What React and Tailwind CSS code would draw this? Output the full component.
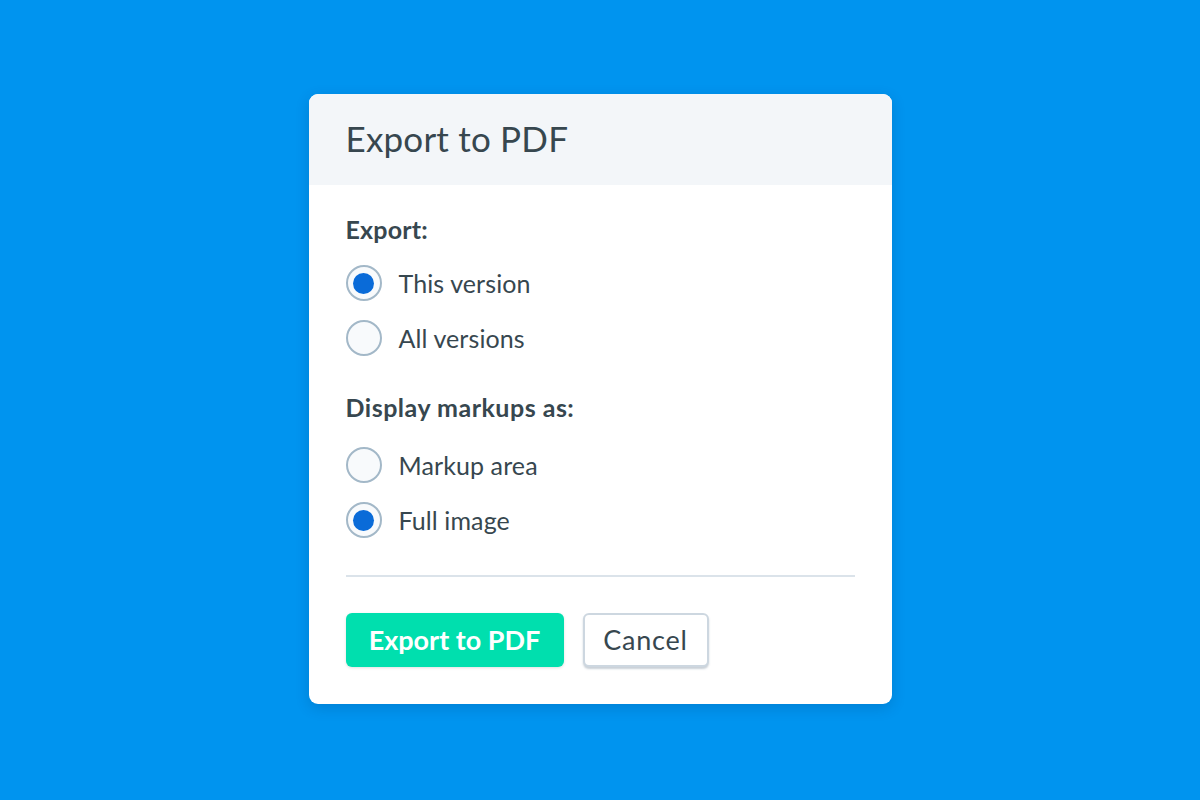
import { useState } from 'react';

function Radio({ checked, label, onClick }) {
  return (
    <button onClick={onClick} className="flex items-center gap-[17px] h-[36px] text-left">
      <span className="w-[36px] h-[36px] rounded-full border-2 border-[#a3b8c8] bg-[#f8fafc] flex items-center justify-center shrink-0">
        {checked && <span className="w-[21px] h-[21px] rounded-full bg-[#0a6bd8]" />}
      </span>
      <span className="text-[25px] leading-[30px] text-[#37474f] tracking-[0.1px]">{label}</span>
    </button>
  );
}

export default function App() {
  const [version, setVersion] = useState('this');
  const [markup, setMarkup] = useState('full');

  return (
    <div className="w-full h-[800px] bg-[#0094ef] flex items-center justify-center font-['Lato','Open_Sans',sans-serif]">
      <div className="w-[583px] h-[610px] mb-[2px] bg-white rounded-[9px] overflow-hidden shadow-[0_4px_14px_rgba(0,40,90,0.18)] flex flex-col">
        <div className="h-[91px] shrink-0 bg-[#f3f6f9] px-[37px] flex items-center">
          <h1 className="text-[35px] leading-[40px] text-[#37474f] font-normal tracking-[0.2px] -mt-[3px]">Export to PDF</h1>
        </div>

        <div className="px-[37px] pt-[30px] flex flex-col">
          <div className="text-[25px] leading-[28px] font-bold text-[#37474f] tracking-[0.2px]">Export:</div>
          <div className="mt-[22px] flex flex-col gap-[19px]">
            <Radio checked={version === 'this'} label="This version" onClick={() => setVersion('this')} />
            <Radio checked={version === 'all'} label="All versions" onClick={() => setVersion('all')} />
          </div>

          <div className="mt-[37px] text-[25px] leading-[28px] font-bold text-[#37474f] tracking-[0.5px]">Display markups as:</div>
          <div className="mt-[26px] flex flex-col gap-[19px]">
            <Radio checked={markup === 'area'} label="Markup area" onClick={() => setMarkup('area')} />
            <Radio checked={markup === 'full'} label="Full image" onClick={() => setMarkup('full')} />
          </div>

          <div className="mt-[37px] h-[2px] bg-[#dbe3ea]" />

          <div className="mt-[36px] flex gap-[19px]">
            <button className="h-[54px] w-[218px] rounded-[6px] bg-[#00dfae] text-white text-[27px] font-bold shadow-[0_1px_3px_rgba(0,0,0,0.12)]">
              Export to PDF
            </button>
            <button className="h-[54px] w-[126px] rounded-[6px] bg-white border-2 border-[#cdd7e0] text-[#37474f] text-[27px] tracking-[0.8px] shadow-[0_2px_2px_rgba(100,120,140,0.35)]">
              Cancel
            </button>
          </div>
        </div>
      </div>
    </div>
  );
}
